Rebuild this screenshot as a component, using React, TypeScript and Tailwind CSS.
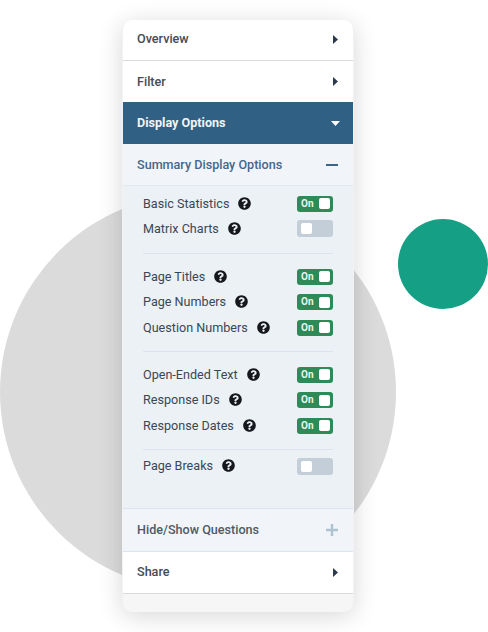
import React from "react";

const font = { fontFamily: "Roboto, sans-serif" };

function Help() {
  return (
    <svg width="13" height="13" viewBox="0 0 512 512" className="shrink-0">
      <path
        fill="#16181d"
        d="M504 256c0 137-111 248-248 248S8 393 8 256C8 119 119 8 256 8s248 111 248 248zM262.655 90c-54.497 0-89.255 22.957-116.549 63.758-3.536 5.286-2.353 12.415 2.715 16.258l34.699 26.31c5.205 3.947 12.621 3.008 16.665-2.122 17.864-22.658 30.113-35.797 57.303-35.797 20.429 0 45.698 13.148 45.698 32.958 0 14.976-12.363 22.667-32.534 33.976C247.128 238.528 216 254.941 216 296v4c0 6.627 5.373 12 12 12h56c6.627 0 12-5.373 12-12v-1.333c0-28.462 83.186-29.647 83.186-106.667 0-58.002-60.165-102-116.531-102zM256 338c-25.365 0-46 20.635-46 46 0 25.364 20.635 46 46 46s46-20.636 46-46c0-25.365-20.635-46-46-46z"
      />
    </svg>
  );
}

function Toggle({ on, low }: { on: boolean; low?: boolean }) {
  if (on) {
    return (
      <div className="w-9 h-4 rounded-[3px] bg-[#2e8b57] flex items-center justify-between pl-1 pr-[3px]">
        <span className="text-[10px] leading-none font-bold text-[#e8f5ee]">On</span>
        <span className="w-[11px] h-[11px] rounded-[2px] bg-white" />
      </div>
    );
  }
  return (
    <div className={low ? "w-9 h-[17px] mt-[2px] rounded-[3px] bg-[#c3ced9] flex items-center pl-1" : "w-9 h-[17px] rounded-[3px] bg-[#c3ced9] flex items-center pl-1"}>
      <span className="w-[11px] h-[11px] rounded-[2px] bg-white" />
    </div>
  );
}

function Row({ label, on, h, low }: { label: string; on: boolean; h: string; low?: boolean }) {
  return (
    <div className={`flex items-center justify-between ${h}`}>
      <div className="flex items-center gap-[9px]">
        <span className="text-[12.6px] text-[#3c4654] pt-px">{label}</span>
        <Help />
      </div>
      <Toggle on={on} low={low} />
    </div>
  );
}

function Arrow() {
  return (
    <svg width="5" height="9" viewBox="0 0 5 9">
      <path d="M0 0 L5 4.5 L0 9 Z" fill="#2c3a4e" />
    </svg>
  );
}

export default function App() {
  return (
    <div className="relative w-[488px] h-[632px] bg-white overflow-hidden" style={font}>
      <div className="absolute left-0 top-[194px] w-[396px] h-[396px] rounded-full bg-[#dbdbdb]" />
      <div className="absolute left-[398px] top-[219px] w-[90px] h-[90px] rounded-full bg-[#159f85]" />
      <div className="absolute left-[122px] top-[20px] w-[232px] h-[592px] rounded-[10px] bg-[#f6f6f6] border-x border-[#f2f2f2] overflow-hidden shadow-[0_4px_24px_rgba(0,0,0,0.16)] flex flex-col">
        <div className="h-[41px] shrink-0 bg-white border-b border-[#dcdcdc] flex items-center justify-between pl-[14px] pr-[15px] pb-[2px]">
          <span className="text-[12.6px] font-medium text-[#454b54]">Overview</span>
          <Arrow />
        </div>
        <div className="h-[41px] shrink-0 bg-white flex items-center justify-between pl-[14px] pr-[15px]">
          <span className="text-[12.6px] font-medium text-[#454b54] pt-px">Filter</span>
          <Arrow />
        </div>
        <div className="h-[42px] shrink-0 bg-[#306083] flex items-center justify-between pl-[14px] pr-[13px]">
          <span className="text-[12.6px] font-bold text-[#f0f4f7]">Display Options</span>
          <svg width="9" height="5" viewBox="0 0 9 5">
            <path d="M0 0 L9 0 L4.5 5 Z" fill="#ffffff" />
          </svg>
        </div>
        <div className="h-[42px] shrink-0 bg-[#f1f5fa] border-b border-[#e3e8ee] flex items-center justify-between pl-[14px] pr-[15px]">
          <span className="text-[12.6px] font-medium text-[#46678a] pt-px">Summary Display Options</span>
          <span className="w-3 h-[2px] bg-[#3e6485]" />
        </div>
        <div className="h-[323px] shrink-0 bg-[#ecf1f6] border-b border-[#dce5ef] px-5 pt-[5px]">
          <Row label="Basic Statistics" on h="h-[25px]" />
          <Row label="Matrix Charts" on={false} h="h-[25px]" />
          <div className="border-b border-[#dde4ed] mt-[12px] mb-[10px]" />
          <Row label="Page Titles" on h="h-[25px]" />
          <Row label="Page Numbers" on h="h-[26px]" />
          <Row label="Question Numbers" on h="h-[25px]" />
          <div className="border-b border-[#dde4ed] mt-[11px] mb-[10px]" />
          <Row label="Open-Ended Text" on h="h-[25px]" />
          <Row label="Response IDs" on h="h-[26px]" />
          <Row label="Response Dates" on h="h-[25px]" />
          <div className="border-b border-[#dde4ed] mt-[11px] mb-[3px]" />
          <Row label="Page Breaks" on={false} h="h-[25px]" low />
        </div>
        <div className="h-[43px] shrink-0 bg-[#f1f5fa] border-b border-[#dce5ef] flex items-center justify-between pl-[14px] pr-[15px]">
          <span className="text-[12.6px] font-medium text-[#4f5a68]">Hide/Show Questions</span>
          <svg width="12" height="12" viewBox="0 0 12 12">
            <path d="M4.75 0h2.5v4.75H12v2.5H7.25V12h-2.5V7.25H0v-2.5h4.75z" fill="#afc3d0" />
          </svg>
        </div>
        <div className="h-[42px] shrink-0 bg-white border-b border-[#d9d9d9] flex items-center justify-between pl-[14px] pr-[15px]">
          <span className="text-[12.6px] font-medium text-[#454b54]">Share</span>
          <Arrow />
        </div>
      </div>
    </div>
  );
}
